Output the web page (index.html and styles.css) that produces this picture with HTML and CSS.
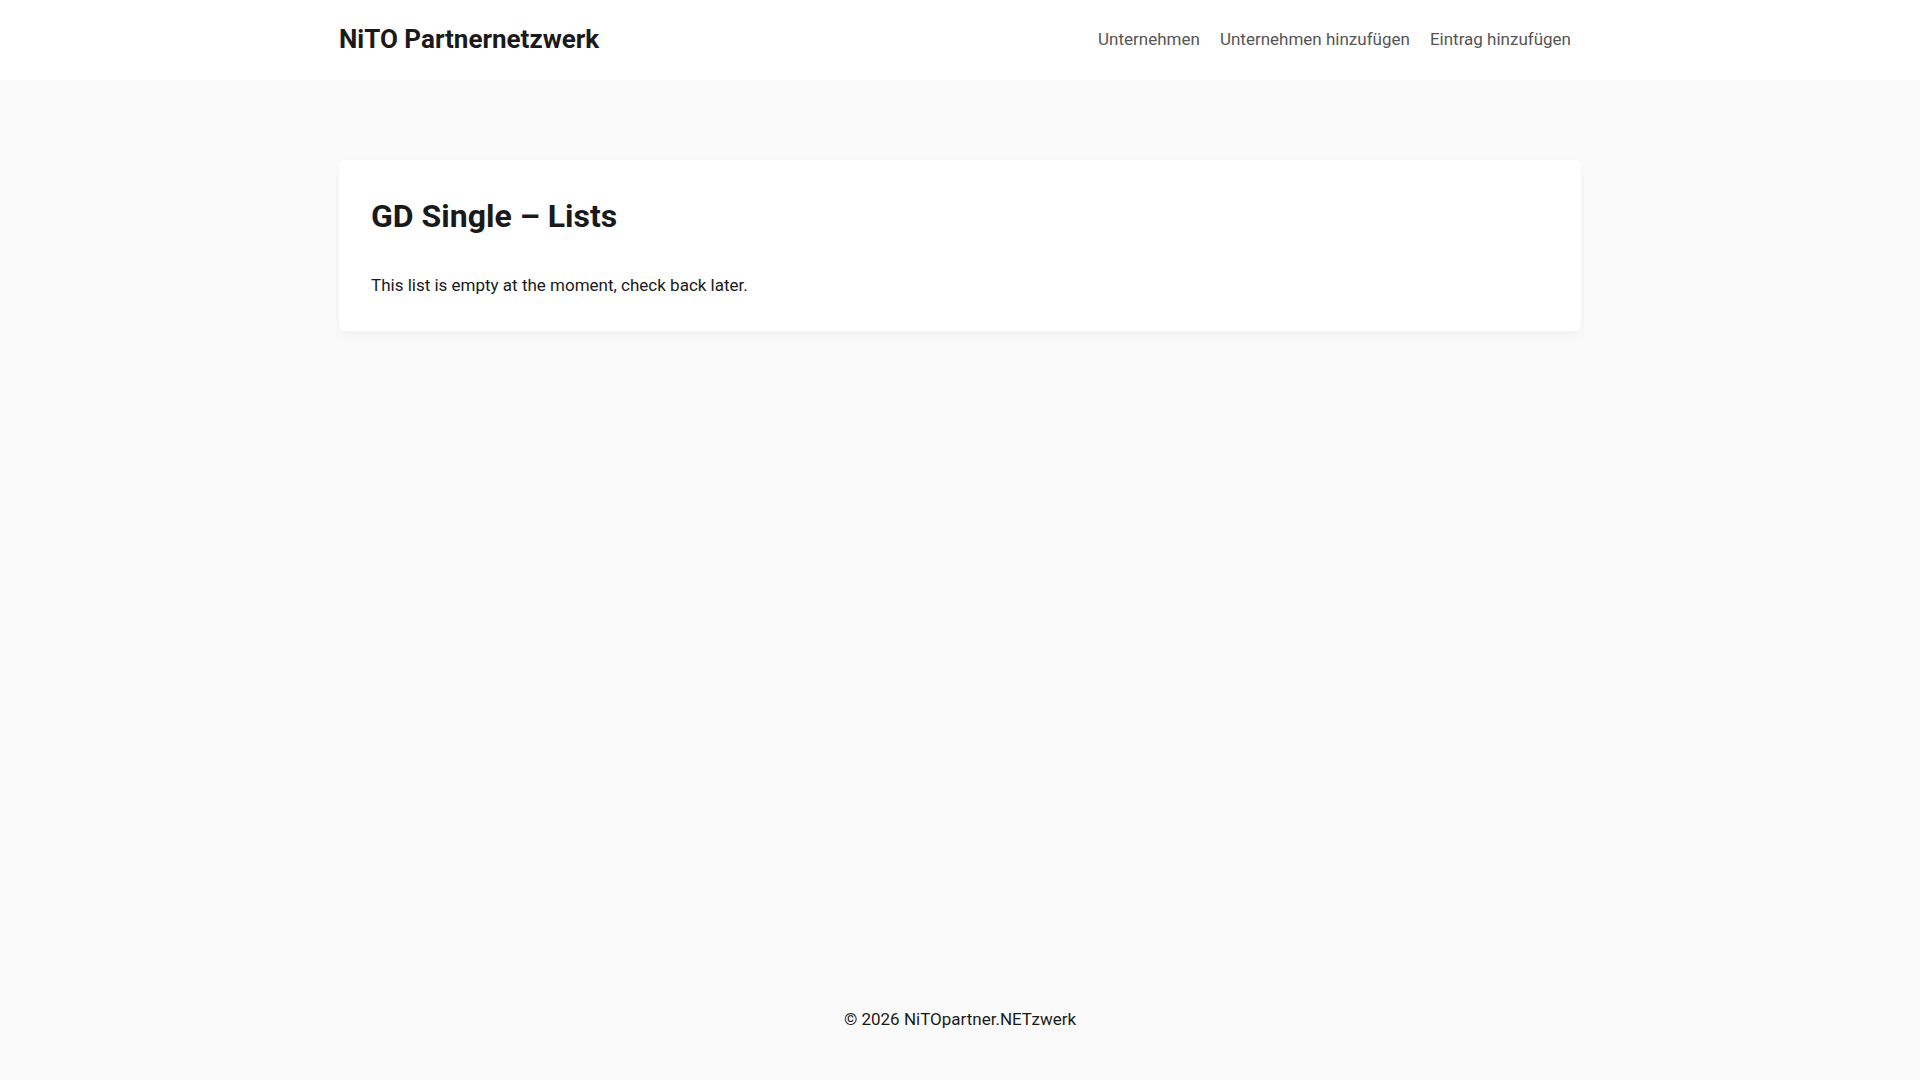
FILE: index.html
```html
<!DOCTYPE html>
<html lang="de">
<head>
<meta charset="utf-8">
<title>GD Single – Lists – NiTO Partnernetzwerk</title>
<link rel="stylesheet" href="styles.css">
</head>
<body>
<div class="page">
  <header class="site-header">
    <div class="container header-inner">
      <a class="logo" href="#">NiTO Partnernetzwerk</a>
      <nav class="nav">
        <a href="#">Unternehmen</a>
        <a href="#">Unternehmen hinzufügen</a>
        <a href="#">Eintrag hinzufügen</a>
      </nav>
    </div>
  </header>
  <main class="main">
    <div class="container">
      <article class="card">
        <h1 class="title">GD Single – Lists</h1>
        <p class="text">This list is empty at the moment, check back later.</p>
      </article>
    </div>
  </main>
  <footer class="site-footer">
    <p>© 2026 NiTOpartner.NETzwerk</p>
  </footer>
</div>
</body>
</html>
```
FILE: styles.css
```css
* { box-sizing: border-box; }
html, body { margin: 0; padding: 0; }
body {
  font-family: Roboto, "Noto Sans", sans-serif;
  background: #fafafa;
  color: #1a1a1a;
}
a { text-decoration: none; }
.page {
  min-height: 100vh;
  display: flex;
  flex-direction: column;
}
.container {
  width: 1242px;
  margin: 0 auto;
}
.site-header {
  background: #ffffff;
  height: 80px;
}
.header-inner {
  height: 78px;
  display: flex;
  align-items: center;
  justify-content: space-between;
}
.logo {
  font-size: 26px;
  font-weight: 700;
  color: #1a1a1a;
}
.nav {
  display: flex;
  gap: 0;
}
.nav a {
  font-size: 17px;
  color: #555555;
  padding: 0 10px;
}
.main {
  flex: 1;
  padding-top: 80px;
}
.card {
  background: #ffffff;
  border-radius: 6px;
  box-shadow: 0 4px 12px rgba(0,0,0,0.04);
  padding: 37px 32px 31px;
}
.title {
  margin: 0;
  font-size: 32px;
  font-weight: 700;
  line-height: 1.2;
  color: #1a1a1a;
}
.text {
  margin: 37px 0 0;
  font-size: 17px;
  line-height: 1.6;
  color: #1a1a1a;
}
.site-footer {
  padding: 0 0 47px;
  text-align: center;
}
.site-footer p {
  margin: 0;
  font-size: 17px;
  line-height: 1.6;
  color: #1a1a1a;
}
```
